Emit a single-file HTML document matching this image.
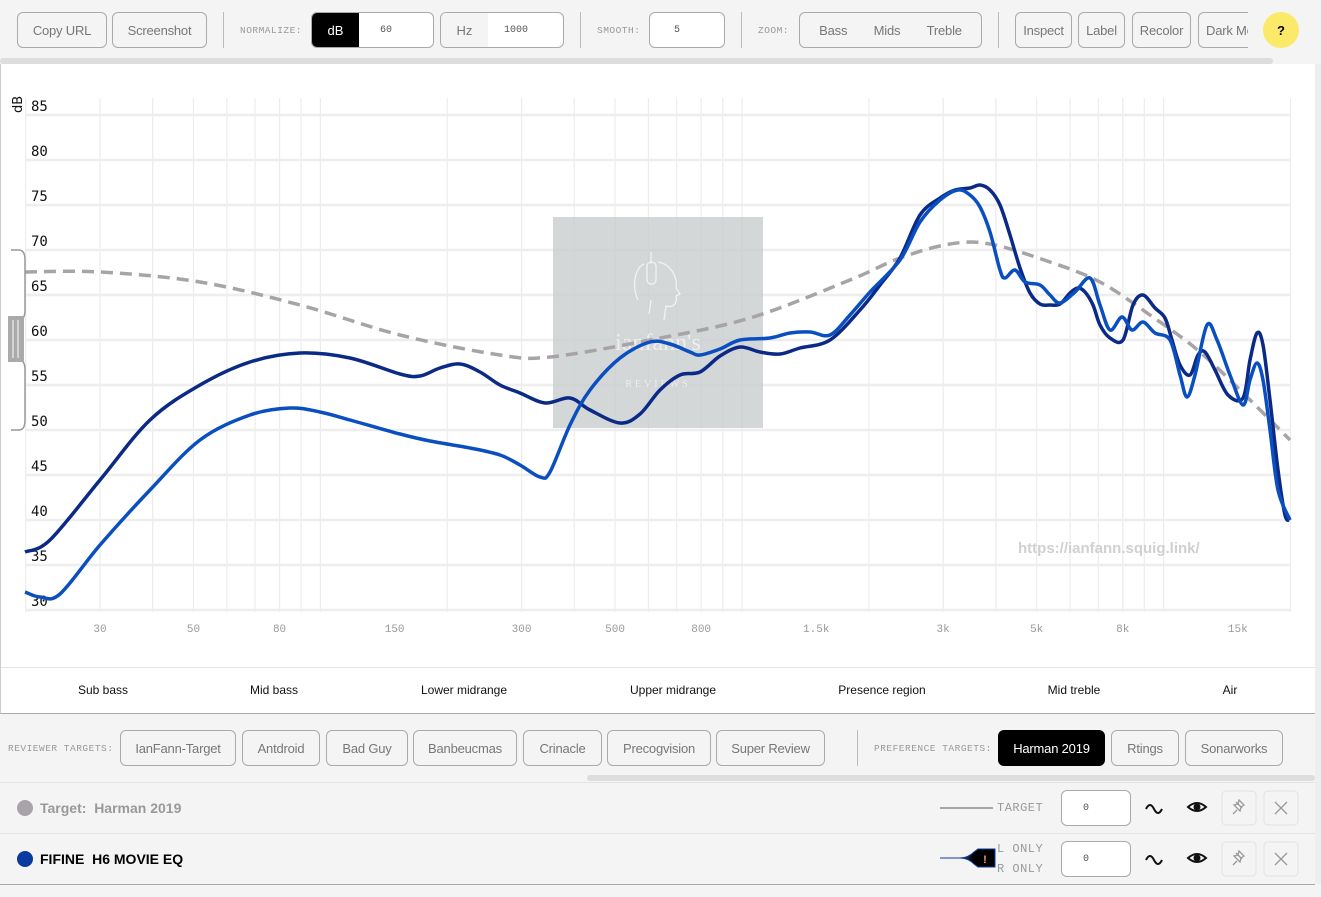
<!DOCTYPE html>
<html><head><meta charset="utf-8">
<style>
*{box-sizing:border-box;margin:0;padding:0}
body{width:1321px;height:897px;overflow:hidden;background:#f4f4f4;font-family:"Liberation Sans",sans-serif;position:relative}
.abs{position:absolute}
.btn{position:absolute;height:36px;border:1px solid #aaa;border-radius:6px;background:#f4f4f4;color:#777;font-size:13px;display:flex;align-items:center;justify-content:center;letter-spacing:-0.2px}
.lbl{position:absolute;font-family:"Liberation Mono",monospace;font-size:9.5px;color:#999;letter-spacing:0.5px}
.sep{position:absolute;width:1px;background:#bbb}
.inp{position:absolute;height:36px;border:1px solid #aaa;border-radius:6px;background:#fff;font-family:"Liberation Mono",monospace;font-size:10px;color:#555;display:flex;align-items:center}
.band{position:absolute;top:683px;font-size:12px;color:#111;transform:translateX(-50%)}
.mono{font-family:"Liberation Mono",monospace}
</style></head><body>
<div class="btn" style="left:17px;top:12px;width:90px">Copy URL</div>
<div class="btn" style="left:112px;top:12px;width:95px">Screenshot</div>
<div class="sep" style="left:223px;top:12px;height:36px"></div>
<div class="lbl" style="left:240px;top:25px">NORMALIZE:</div>
<div class="inp" style="left:311px;top:12px;width:123px;overflow:hidden"><div style="width:47px;height:100%;background:#000;color:#fff;font-family:'Liberation Sans';font-size:13px;display:flex;align-items:center;justify-content:center">dB</div><span style="margin-left:21px">60</span></div>
<div class="inp" style="left:440px;top:12px;width:124px;overflow:hidden;background:#fff"><div style="width:47px;height:100%;background:#f4f4f4;color:#777;font-family:'Liberation Sans';font-size:13px;display:flex;align-items:center;justify-content:center">Hz</div><span style="margin-left:16px">1000</span></div>
<div class="sep" style="left:580px;top:12px;height:36px"></div>
<div class="lbl" style="left:597px;top:25px">SMOOTH:</div>
<div class="inp" style="left:649px;top:12px;width:76px;padding-left:24px">5</div>
<div class="sep" style="left:741px;top:12px;height:36px"></div>
<div class="lbl" style="left:758px;top:25px">ZOOM:</div>
<div class="btn" style="left:799px;top:12px;width:183px;justify-content:space-around;padding:0 6px"><span>Bass</span><span>Mids</span><span>Treble</span></div>
<div class="sep" style="left:998px;top:12px;height:36px"></div>
<div class="btn" style="left:1015px;top:12px;width:57px">Inspect</div>
<div class="btn" style="left:1078px;top:12px;width:47px">Label</div>
<div class="btn" style="left:1132px;top:12px;width:59px">Recolor</div>
<div class="btn" style="left:1198px;top:12px;width:50px;justify-content:flex-start;padding-left:7px;overflow:hidden;white-space:nowrap;border-right:none;border-radius:6px 0 0 6px">Dark Mode</div>
<div class="abs" style="left:1263px;top:12px;width:36px;height:36px;border-radius:50%;background:#fbe96a;font-size:13px;font-weight:bold;display:flex;align-items:center;justify-content:center">?</div>
<div class="abs" style="left:0;top:58px;width:1273px;height:6px;background:#ddd;border-radius:3px"></div>
<div class="abs" style="left:0;top:64px;width:1315px;height:650px;background:#fff;border-left:1px solid #ccc;border-bottom:1px solid #aaa"></div>
<div class="abs" style="left:1315px;top:64px;width:6px;height:820px;background:#eee"></div>
<svg class="abs" style="left:0;top:64px" width="1315" height="610" viewBox="0 64 1315 610">
<g id="grid" stroke="#ececec" stroke-width="1.2"></g>
<rect x="553" y="217" width="210" height="211" fill="#c9cdcd" opacity="0.8"/>
<g fill="none" stroke="#f2f2f2" stroke-width="1.3">
<path d="M651 252 v12 M644 264 c-10 4 -12 25 -6 36 M658 262 c12 2 20 14 18 26 l4 6 l-4 2 c2 8 -4 12 -10 10 l-2 14 M651 300 l-2 14"/>
<rect x="647" y="262" width="9" height="22" rx="4"/>
</g>
<text x="658" y="350" text-anchor="middle" font-family="Liberation Serif" font-size="24" fill="#eee">ianfann's</text>
<text x="658" y="387" text-anchor="middle" font-family="Liberation Serif" font-size="10" letter-spacing="3" fill="#eee">REVIEWS</text>
<g id="ylab" font-family="DejaVu Sans Mono,Liberation Mono" font-size="14" fill="#111"></g>
<text transform="translate(22,113) rotate(-90)" font-family="DejaVu Sans" font-size="13" fill="#111">dB</text>
<g id="xlab" font-family="Liberation Mono" font-size="11" fill="#999" text-anchor="middle"></g>
<text x="1018" y="553" font-size="15" font-weight="bold" fill="#d0d0d0">https://ianfann.squig.link/</text>
<path id="tgt" fill="none" stroke="#a8a3a8" stroke-width="3.5" stroke-dasharray="12 7"/>
<path id="dark" fill="none" stroke="#0b2a86" stroke-width="3.5" stroke-linejoin="round"/>
<path id="light" fill="none" stroke="#0a4fc0" stroke-width="3.5" stroke-linejoin="round"/>
<g fill="#fff" stroke="#999" stroke-width="1.5">
<path d="M11 250 h8 q6 0 6 10 v50 q0 10 -6 10 v40 q6 0 6 10 v50 q0 10 -6 10 h-8"/>
</g>
<rect x="8" y="316" width="16" height="46" fill="#aaa"/>
<path d="M13 320 v38 M18 320 v38" stroke="#fff" stroke-width="1"/>
</svg>
<div class="abs" style="left:1px;top:667px;width:1314px;height:1px;background:#e3e3e3"></div>
<div class="band" style="left:103px">Sub bass</div>
<div class="band" style="left:274px">Mid bass</div>
<div class="band" style="left:464px">Lower midrange</div>
<div class="band" style="left:673px">Upper midrange</div>
<div class="band" style="left:882px">Presence region</div>
<div class="band" style="left:1074px">Mid treble</div>
<div class="band" style="left:1230px">Air</div>
<div class="lbl" style="left:8px;top:743px">REVIEWER TARGETS:</div>
<div class="btn" style="left:120px;top:730px;width:116px">IanFann-Target</div>
<div class="btn" style="left:242px;top:730px;width:78px">Antdroid</div>
<div class="btn" style="left:326px;top:730px;width:82px">Bad Guy</div>
<div class="btn" style="left:413px;top:730px;width:104px">Banbeucmas</div>
<div class="btn" style="left:523px;top:730px;width:79px">Crinacle</div>
<div class="btn" style="left:607px;top:730px;width:104px">Precogvision</div>
<div class="btn" style="left:716px;top:730px;width:109px">Super Review</div>
<div class="sep" style="left:857px;top:730px;height:36px"></div>
<div class="lbl" style="left:874px;top:743px">PREFERENCE TARGETS:</div>
<div class="btn" style="left:998px;top:730px;width:107px;background:#000;color:#fff;border-color:#000">Harman 2019</div>
<div class="btn" style="left:1111px;top:730px;width:68px">Rtings</div>
<div class="btn" style="left:1185px;top:730px;width:98px">Sonarworks</div>
<div class="abs" style="left:587px;top:775px;width:728px;height:6px;background:#ddd;border-radius:3px"></div>
<div class="abs" style="left:0;top:782px;width:1315px;height:1px;background:#e3e3e3"></div>
<div class="abs" style="left:17px;top:800px;width:16px;height:16px;border-radius:50%;background:#a8a3a8"></div>
<div class="abs" style="left:40px;top:800px;font-size:14px;font-weight:bold;color:#999">Target:&nbsp; Harman 2019</div>
<div class="abs" style="left:940px;top:807px;width:53px;height:2px;background:#a8a3a8"></div>
<div class="abs mono" style="left:997px;top:801px;font-size:12px;color:#999;letter-spacing:0.5px">TARGET</div>
<div class="inp" style="left:1061px;top:790px;width:70px;padding-left:21px">0</div>
<div class="abs" style="left:0;top:833px;width:1315px;height:1px;background:#e3e3e3"></div>
<div class="abs" style="left:17px;top:851px;width:16px;height:16px;border-radius:50%;background:#0a3a9e"></div>
<div class="abs" style="left:40px;top:851px;font-size:14px;font-weight:bold;color:#000">FIFINE&nbsp; H6 MOVIE EQ</div>
<svg class="abs" style="left:940px;top:846px" width="56" height="24"><defs><linearGradient id="g" x1="0" x2="1"><stop offset="0" stop-color="#cfd8f0"/><stop offset="0.6" stop-color="#000"/></linearGradient></defs><path d="M0 12 h20 q8 0 14 -6 l4 -3 h17 v18 h-17 l-4 -3 q-6 -6 -14 -6 z" fill="url(#g)" stroke="#0a3a9e" stroke-width="1"/><text x="45" y="17" fill="#f96" font-size="11" font-weight="bold" text-anchor="middle">!</text></svg>
<div class="abs mono" style="left:997px;top:842px;font-size:12px;color:#999;letter-spacing:0.5px">L ONLY</div>
<div class="abs mono" style="left:997px;top:862px;font-size:12px;color:#999;letter-spacing:0.5px">R ONLY</div>
<div class="inp" style="left:1061px;top:841px;width:70px;padding-left:21px">0</div>
<div class="abs" style="left:0;top:884px;width:1315px;height:1px;background:#aaa"></div>
<svg class="abs" style="left:1140px;top:790px" width="170" height="90" fill="none" stroke="#111" stroke-width="2">
<path d="M6 19 q4 -8 8 0 t8 0"/><path d="M6 70 q4 -8 8 0 t8 0"/>
<path d="M48 17 q9 -8 18 0 q-9 8 -18 0z"/><circle cx="57" cy="17" r="2.5" fill="#111"/>
<path d="M48 68 q9 -8 18 0 q-9 8 -18 0z"/><circle cx="57" cy="68" r="2.5" fill="#111"/>
<rect x="82" y="1" width="34" height="34" rx="4" stroke="#e2e2e2" stroke-width="1"/>
<rect x="124" y="1" width="34" height="34" rx="4" stroke="#e2e2e2" stroke-width="1"/>
<rect x="82" y="52" width="34" height="34" rx="4" stroke="#e2e2e2" stroke-width="1"/>
<rect x="124" y="52" width="34" height="34" rx="4" stroke="#e2e2e2" stroke-width="1"/>
<g stroke="#999" stroke-width="1.3"><path d="M96 12 l6 6 m-3 -8 l5 5 l-3 2 l-1 4 l-6 -6 l4 -1z M97 20 l-4 4"/><path d="M96 63 l6 6 m-3 -8 l5 5 l-3 2 l-1 4 l-6 -6 l4 -1z M97 71 l-4 4"/>
<path d="M135 12 l12 12 m0 -12 l-12 12 M135 63 l12 12 m0 -12 l-12 12"/></g>
</svg>
<script>
const X=f=>-522.8+421.6*Math.log10(f), Y=d=>115+(85-d)*9;
let g='';
const fs=[20,30,40,50,60,70,80,90,100,200,300,400,500,600,700,800,900,1000,2000,3000,4000,5000,6000,7000,8000,9000,10000,20000];
fs.forEach(f=>{const x=X(f);g+=`<line x1="${x}" y1="98" x2="${x}" y2="612"/>`});
for(let d=30;d<=85;d+=5)g+=`<line x1="25" y1="${Y(d)}" x2="1291" y2="${Y(d)}" stroke-width="2.5" stroke="#eee"/>`;
document.getElementById('grid').innerHTML=g;
let yl='';for(let d=30;d<=85;d+=5)yl+=`<text x="31" y="${Y(d)-4}">${d}</text>`;
document.getElementById('ylab').innerHTML=yl;
let xl='';[[30,'30'],[50,'50'],[80,'80'],[150,'150'],[300,'300'],[500,'500'],[800,'800'],[1500,'1.5k'],[3000,'3k'],[5000,'5k'],[8000,'8k'],[15000,'15k']].forEach(([f,t])=>xl+=`<text x="${X(f)}" y="632">${t}</text>`);
document.getElementById('xlab').innerHTML=xl;
function cr(p){let d=`M${p[0][0]} ${p[0][1]}`;for(let i=0;i<p.length-1;i++){const a=p[i-1]||p[i],b=p[i],c=p[i+1],e=p[i+2]||c;d+=` C${b[0]+(c[0]-a[0])/6} ${b[1]+(c[1]-a[1])/6} ${c[0]-(e[0]-b[0])/6} ${c[1]-(e[1]-b[1])/6} ${c[0]} ${c[1]}`;}return d;}
const dark=[[25,552],[50,540],[100,480],[150,420],[200,385],[250,362],[300,353],[350,358],[400,374],[420,376],[440,368],[460,364],[480,372],[500,385],[520,393],[545,403],[570,398],[590,410],[620,423],[640,414],[660,390],[680,375],[700,372],[720,356],[740,347],[760,352],[780,354],[800,348],[830,340],[860,310],[880,285],[900,258],[920,215],[940,198],[955,190],[970,188],[980,185],[990,190],[1000,205],[1010,235],[1020,268],[1030,293],[1040,304],[1050,305],[1060,304],[1070,293],[1078,288],[1085,292],[1093,305],[1100,325],[1110,338],[1123,340],[1133,305],[1143,295],[1155,308],[1165,318],[1172,340],[1180,365],[1190,375],[1198,355],[1205,352],[1215,370],[1228,395],[1243,398],[1250,360],[1257,333],[1263,345],[1270,400],[1278,470],[1285,515],[1290,520]];
const light=[[25,592],[40,597],[60,594],[100,545],[150,490],[200,440],[250,415],[290,408],[320,412],[350,420],[400,434],[430,441],[470,448],[500,455],[520,465],[540,477],[550,472],[570,425],[590,390],[620,358],[650,342],[670,344],[690,352],[700,355],[720,349],[740,340],[770,338],[790,333],[810,332],[830,335],[850,315],[870,292],[900,260],[920,222],[940,200],[958,190],[970,195],[980,207],[990,232],[1000,270],[1005,278],[1015,270],[1025,282],[1040,285],[1050,295],[1060,303],[1075,292],[1090,278],[1100,305],[1110,330],[1122,317],[1132,330],[1143,322],[1155,333],[1170,340],[1180,375],[1187,397],[1195,375],[1207,325],[1217,340],[1230,375],[1243,405],[1250,380],[1257,363],[1263,380],[1270,430],[1278,490],[1290,520]];
const tgt=[[25,272],[100,272],[200,282],[300,305],[400,335],[500,355],[550,357],[650,340],[750,318],[850,280],[900,258],[950,244],[990,244],[1050,262],[1100,282],[1150,315],[1200,352],[1250,400],[1290,440]];
document.getElementById('dark').setAttribute('d',cr(dark));
document.getElementById('light').setAttribute('d',cr(light));
document.getElementById('tgt').setAttribute('d',cr(tgt));
</script>
</body></html>
